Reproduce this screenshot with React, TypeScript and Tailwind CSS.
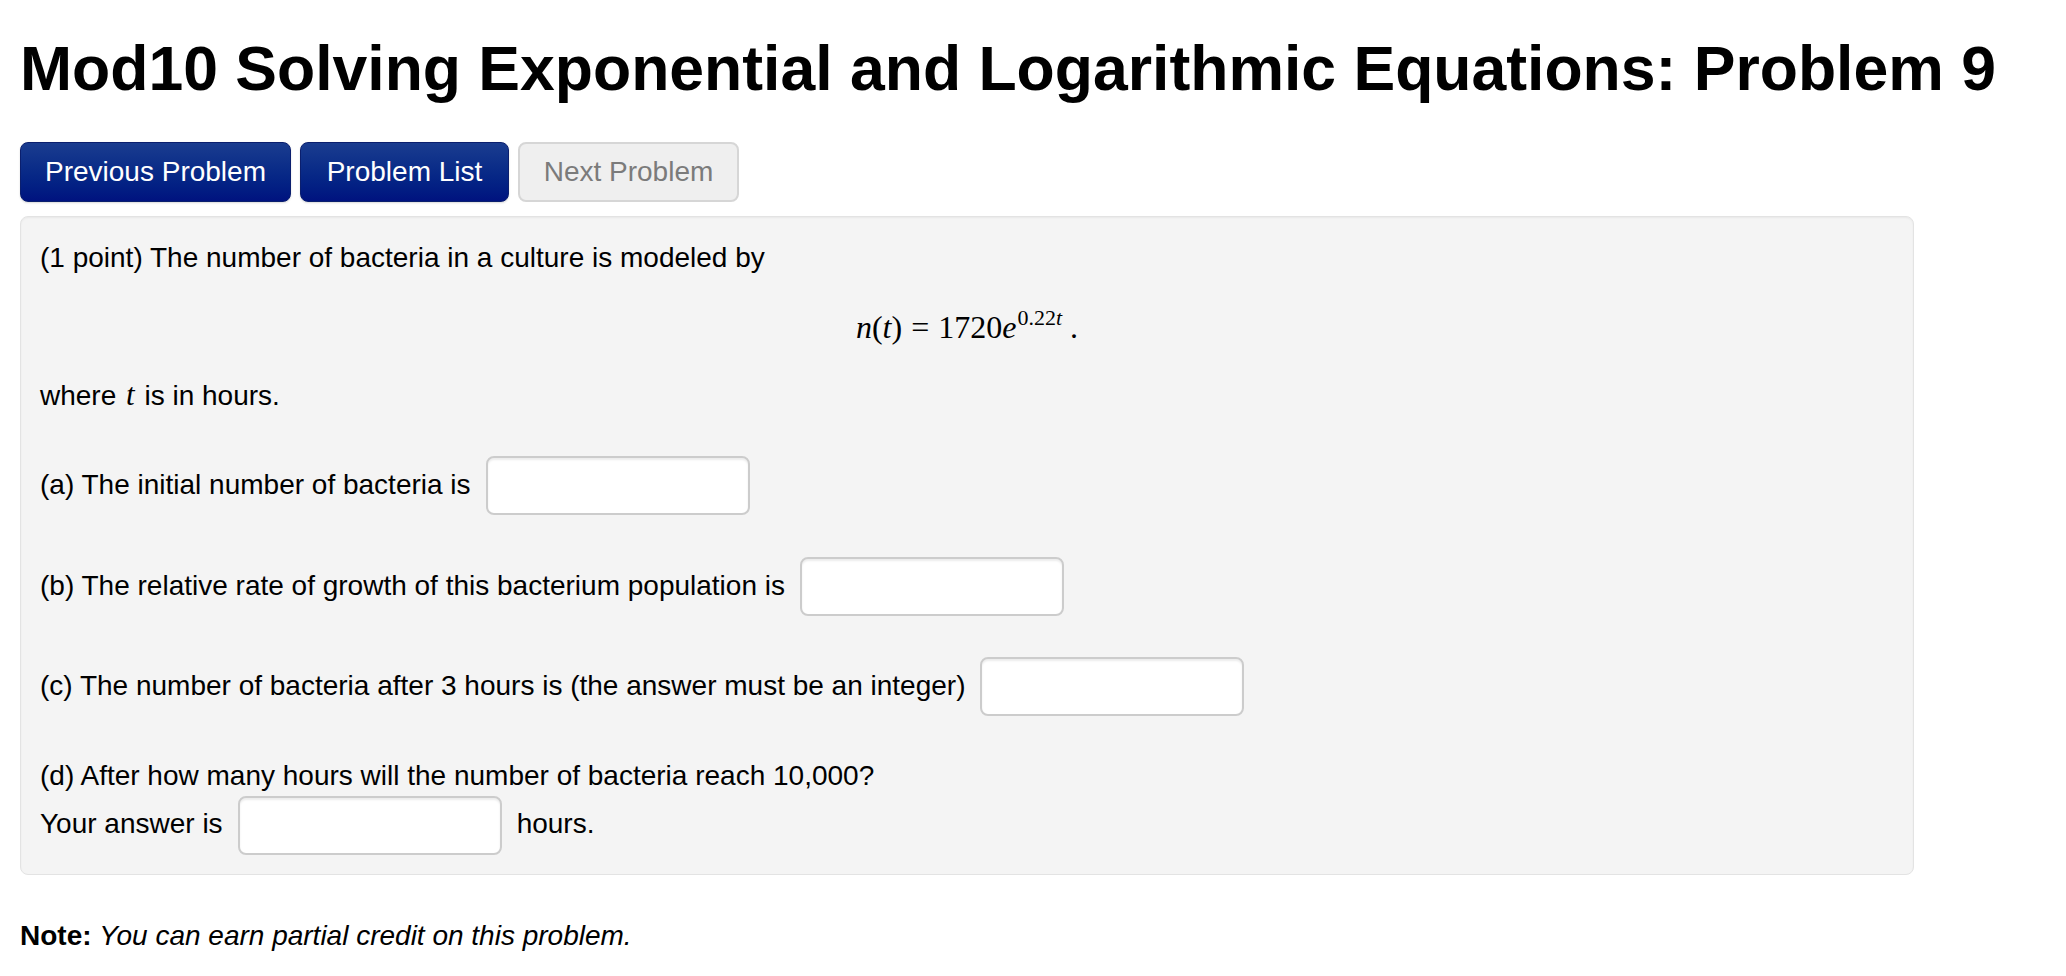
import React from "react"

const sans = { fontFamily: '"Liberation Sans", Arial, Helvetica, sans-serif' }
const serif = { fontFamily: '"Liberation Serif", "Times New Roman", serif' }

function AnswerBox() {
  return (
    <input
      type="text"
      className="h-[59px] w-[264px] shrink-0 rounded-[8px] border-2 border-[#cccccc] bg-white px-3 text-[28px] shadow-[inset_0_2px_2px_rgba(0,0,0,0.075)] outline-none"
    />
  )
}

function NavButton({ label, width, disabled }: { label: string; width: string; disabled?: boolean }) {
  if (disabled) {
    return (
      <button
        className={`${width} h-[60px] rounded-[8px] border-2 border-[#d6d6d6] bg-[#efefef] text-[28px] text-[#7b7b7b]`}
      >
        {label}
      </button>
    )
  }
  return (
    <button
      className={`${width} h-[60px] rounded-[8px] border border-[#0b1f6e] bg-gradient-to-b from-[#1a3c8f] to-[#00127f] text-[28px] text-white shadow-[0_1px_2px_rgba(0,0,0,0.15)]`}
    >
      {label}
    </button>
  )
}

export default function App() {
  return (
    <div className="min-h-screen bg-white px-[20px] text-black" style={sans}>
      {/* Title */}
      <h1 className="pt-[33px] text-[62.5px] font-bold leading-[70px] tracking-normal">
        Mod10 Solving Exponential and Logarithmic Equations: Problem 9
      </h1>

      {/* Navigation */}
      <div className="mt-[39px] flex gap-[9px]">
        <NavButton label="Previous Problem" width="w-[271px]" />
        <NavButton label="Problem List" width="w-[209px]" />
        <NavButton label="Next Problem" width="w-[221px]" disabled />
      </div>

      {/* Problem body */}
      <div className="mt-[14px] w-[1894px] rounded-[8px] border border-[#e3e3e3] bg-[#f4f4f4] px-[19px] pb-[19px] pt-[21px] text-[28px] leading-[40px] shadow-[inset_0_1px_2px_rgba(0,0,0,0.05)]">
        <p>(1 point) The number of bacteria in a culture is modeled by</p>

        <div className="mt-[29px] text-center text-[32px] leading-[40px]" style={serif}>
          <span className="italic">n</span>(<span className="italic">t</span>)
          <span className="mx-[9px]">=</span>
          1720<span className="italic">e</span>
          <sup className="relative -top-[3px] ml-[1px] align-[0.45em] text-[22px]">
            0.22<span className="italic">t</span>
          </sup>
          <span className="ml-[8px]">.</span>
        </div>

        <p className="mt-[28px]">
          where{" "}
          <span className="mx-[2px] italic" style={{ ...serif, fontSize: "31px" }}>
            t
          </span>{" "}
          is in hours.
        </p>

        <div className="mt-[40px] flex items-center">
          <span className="relative -top-[1px]">(a) The initial number of bacteria is</span>
          <span className="ml-[15px]">
            <AnswerBox />
          </span>
        </div>

        <div className="mt-[42px] flex items-center">
          <span className="relative -top-[1px]">(b) The relative rate of growth of this bacterium population is</span>
          <span className="ml-[15px]">
            <AnswerBox />
          </span>
        </div>

        <div className="mt-[41px] flex items-center">
          <span className="relative -top-[1px]">
            (c) The number of bacteria after 3 hours is (the answer must be an integer)
          </span>
          <span className="ml-[15px]">
            <AnswerBox />
          </span>
        </div>

        <p className="mt-[40px]">(d) After how many hours will the number of bacteria reach 10,000?</p>
        <div className="flex items-center">
          <span className="relative -top-[2px]">Your answer is</span>
          <span className="ml-[15px]">
            <AnswerBox />
          </span>
          <span className="relative -top-[2px] ml-[15px]">hours.</span>
        </div>
      </div>

      {/* Note */}
      <p className="mt-[41px] text-[28px] leading-[40px]">
        <span className="font-bold">Note:</span> <i>You can earn partial credit on this problem.</i>
      </p>
    </div>
  )
}
